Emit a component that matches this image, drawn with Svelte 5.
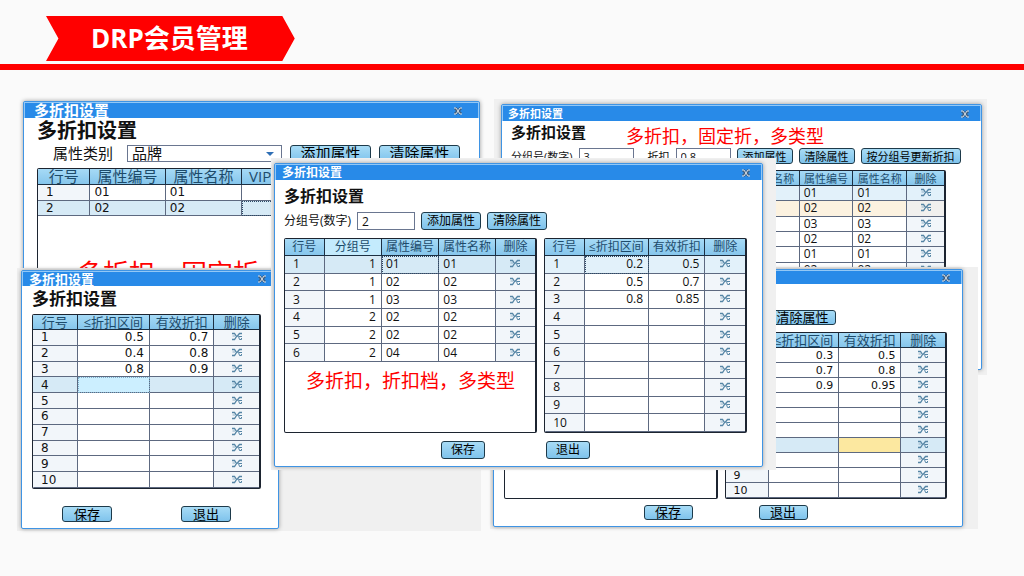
<script lang="ts">
  type Row = { cells: string[]; tone?: string; mark?: number; warm?: number }
  type Sheet = { names: string[]; widths: number[]; align: string; lit?: number; rows: Row[]; remove?: boolean }

  // numbered rows, padded with blanks up to count
  function fill(values: string[][], count: number, blanks: number): Row[] {
    const rows: Row[] = []
    for (let i = 0; i < count; i++) {
      rows.push({ cells: [String(i + 1), ...(values[i] ?? Array(blanks).fill(''))] })
    }
    return rows
  }

  const fixedSheet: Sheet = {
    names: ['行号', '属性编号', '属性名称', 'VIP折扣', ''],
    widths: [53, 76, 77, 68, 148],
    align: 'codes',
    rows: [
      { cells: ['1', '01', '01', '', ''] },
      { cells: ['2', '02', '02', '', ''], tone: 'active', mark: 3 },
    ],
  }

  const rangeSheet: Sheet = {
    names: ['行号', '≤折扣区间', '有效折扣'],
    widths: [45, 73, 65, 45],
    align: 'numbers',
    rows: fill([['0.5', '0.7'], ['0.4', '0.8'], ['0.8', '0.9']], 10, 2),
    remove: true,
  }
  rangeSheet.rows[3].tone = 'active'
  rangeSheet.rows[3].mark = 1

  const typeSheet: Sheet = {
    names: ['', '属性名称', '属性编号', '属性名称'],
    widths: [235, 54, 54, 54, 37],
    align: 'codes',
    rows: ['01', '02', '03', '02', '01', '02'].map((v) => ({ cells: ['', '', v, v] })),
    remove: true,
  }
  typeSheet.rows[0].tone = 'pale'
  typeSheet.rows[1].tone = 'cream'

  const groupSheet: Sheet = {
    names: ['行号', '分组号', '属性编号', '属性名称'],
    widths: [40, 58, 58, 57, 40],
    align: 'groups',
    lit: 1,
    rows: fill(
      [['1', '01', '01'], ['1', '02', '02'], ['1', '03', '03'], ['2', '02', '02'], ['2', '02', '02'], ['2', '04', '04']],
      6,
      3
    ),
    remove: true,
  }
  groupSheet.rows[0].tone = 'active'
  groupSheet.rows[0].mark = 2

  const levelSheet: Sheet = {
    names: ['行号', '≤折扣区间', '有效折扣'],
    widths: [40, 65, 57, 40],
    align: 'numbers',
    rows: fill([['0.2', '0.5'], ['0.5', '0.7'], ['0.8', '0.85']], 10, 2),
    remove: true,
  }
  levelSheet.rows[0].tone = 'pale'
  levelSheet.rows[0].mark = 1

  const bandSheet: Sheet = {
    names: ['行号', '≤折扣区间', '有效折扣'],
    widths: [44, 71, 63, 44],
    align: 'numbers',
    rows: fill([['0.3', '0.5'], ['0.7', '0.8'], ['0.9', '0.95']], 10, 2),
    remove: true,
  }
  bandSheet.rows[6].tone = 'active'
  bandSheet.rows[6].warm = 2

  const sum = (list: number[]) => list.reduce((a, b) => a + b, 0)
</script>

{#snippet titlebar()}
  <header class="titlebar">
    <span>多折扣设置</span>
    <button class="close" aria-label="关闭">
      <svg viewBox="0 0 10 8" width="10" height="8">
        <path d="M2 1L8 7M8 1L2 7" stroke="#3f5f80" stroke-width="3" />
        <path d="M1 1H3L7 7H9M9 1H7L3 7H1" fill="none" stroke="#d6e0ea" />
      </svg>
    </button>
  </header>
{/snippet}

{#snippet grid(sheet: Sheet, note: string)}
  <div class="grid" style="flex-grow: {sum(sheet.widths)}">
    <table class={sheet.align}>
      <colgroup>
        {#each sheet.widths as w}
          <col style="width: {(w / sum(sheet.widths)) * 100}%" />
        {/each}
      </colgroup>
      <thead>
        <tr>
          {#each sheet.names as name, i}
            <th class:lit={sheet.lit === i}>{name}</th>
          {/each}
          {#if sheet.remove}<th>删除</th>{/if}
        </tr>
      </thead>
      <tbody>
        {#each sheet.rows as row}
          <tr class={row.tone}>
            {#each row.cells as cell, i}
              <td class:index={i === 0} class:mark={row.mark === i} class:warm={row.warm === i}>{cell}</td>
            {/each}
            {#if sheet.remove}
              <td class="tool">
                <button class="remove" aria-label="删除">
                  <svg viewBox="0 0 12 9" width="12" height="9" fill="none" stroke="#5585a5">
                    <path d="M1 1.5H3.5L5.5 4.5L3.5 7.5H1" stroke-width="1.3" />
                    <path d="M1.5 4H4" stroke="#8fb0c6" />
                    <path d="M11 1.5H8.5L6 4.5" stroke-width="1.3" />
                    <path d="M11 4.5H7.5L8.5 7.5H10.5V6" />
                  </svg>
                </button>
              </td>
            {/if}
          </tr>
        {/each}
      </tbody>
    </table>
    {#if note}<p class="note">{note}</p>{/if}
  </div>
{/snippet}

{#snippet footer()}
  <footer>
    <button class="btn">保存</button>
    <button class="btn">退出</button>
  </footer>
{/snippet}

<div class="page">
  <div class="top">
    <h1>DRP会员管理</h1>
  </div>

  <main class="desktop">
    <div class="shot fixed">
      <section class="window">
        {@render titlebar()}
        <div class="body">
          <div class="head"><h2>多折扣设置</h2></div>
          <div class="toolbar">
            <label for="kind">属性类别</label>
            <span class="select">
              <select id="kind"><option>品牌</option></select>
              <svg viewBox="0 0 8 4" width="8" height="4"><path d="M0 0H8L4 4Z" fill="#2f6fb5" /></svg>
            </span>
            <button class="btn">添加属性</button>
            <button class="btn">清除属性</button>
          </div>
          <div class="grids">{@render grid(fixedSheet, '多折扣，固定折')}</div>
        </div>
      </section>
    </div>

    <div class="shot types">
      <section class="window">
        {@render titlebar()}
        <div class="body">
          <div class="head">
            <h2>多折扣设置</h2>
            <p class="note">多折扣，固定折，多类型</p>
          </div>
          <div class="toolbar">
            <label for="group-a">分组号(数字)</label>
            <input id="group-a" value="3" />
            <label for="rate">折扣</label>
            <input id="rate" value="0.8" />
            <button class="btn">添加属性</button>
            <button class="btn">清除属性</button>
            <button class="btn long">按分组号更新折扣</button>
          </div>
          <div class="grids">{@render grid(typeSheet, '')}</div>
        </div>
      </section>
    </div>

    <div class="shot range">
      <section class="window">
        {@render titlebar()}
        <div class="body">
          <div class="head"><h2>多折扣设置</h2></div>
          <div class="grids">{@render grid(rangeSheet, '')}</div>
          {@render footer()}
        </div>
      </section>
    </div>

    <div class="shot bands">
      <section class="window">
        {@render titlebar()}
        <div class="body">
          <div class="toolbar">
            <button class="btn">清除属性</button>
          </div>
          <div class="grids">
            <div class="grid blank"></div>
            {@render grid(bandSheet, '')}
          </div>
          {@render footer()}
        </div>
      </section>
    </div>

    <div class="shot levels">
      <section class="window">
        {@render titlebar()}
        <div class="body">
          <div class="head"><h2>多折扣设置</h2></div>
          <div class="toolbar">
            <label for="group-b">分组号(数字)</label>
            <input id="group-b" value="2" />
            <button class="btn">添加属性</button>
            <button class="btn">清除属性</button>
          </div>
          <div class="grids">
            {@render grid(groupSheet, '多折扣，折扣档，多类型')}
            {@render grid(levelSheet, '')}
          </div>
          {@render footer()}
        </div>
      </section>
    </div>
  </main>
</div>

<style>
  :global(body) {
    margin: 0;
    background: #fafafa;
  }
  .page {
    min-height: 100vh;
    font-family: "Open Sans", "Noto Sans CJK SC", sans-serif;
    color: #111;
    overflow: hidden;
  }
  .page * {
    box-sizing: border-box;
  }
  h1, h2, p {
    margin: 0;
  }
  button, input, select {
    font: inherit;
    color: inherit;
    margin: 0;
    padding: 0;
  }

  .top {
    padding: 16px 0 3px 46px;
    border-bottom: 6px solid #f00;
    display: flex;
  }
  h1 {
    padding: 0 47px 0 45px;
    background: #f00;
    clip-path: polygon(0 0, 95% 0, 100% 50%, 95% 100%, 0 100%, 5% 50%);
    color: #fff;
    font-size: 26px;
    line-height: 45px;
    font-weight: 700;
    white-space: nowrap;
  }

  .desktop {
    position: relative;
    min-height: 480px;
  }

  /* each window sits on its own grey plate */
  .shot {
    position: absolute;
    background: #f0f0f0;
    display: flex;
    font-size: var(--size);
    line-height: 1;
    --size: 12px;
    --bar: 16px;
    --title: 12px;
    --heading: 16px;
    --digits: "Open Sans";
    --digit: 12px;
    --th: 17px;
    --btn: 60px;
    --btn-h: 18px;
  }
  .window {
    flex: 1;
    min-width: 0;
    background: #fff;
    border: 1px solid #3f94e4;
    border-radius: 2px;
    box-shadow: 0 0 4px #999;
  }
  .titlebar {
    display: flex;
    align-items: center;
    justify-content: space-between;
    height: var(--bar);
    padding: 0 10px 0 6px;
    border: 1px solid #93c8f6;
    border-bottom: 0;
    background: #288ae8;
    color: #fff;
    font-size: var(--title);
    font-weight: 700;
  }
  .close, .remove {
    display: inline-flex;
    border: 0;
    background: none;
  }
  .body {
    margin: 0 1px;
  }
  .head {
    display: flex;
    align-items: center;
  }
  h2 {
    font-size: var(--heading);
    line-height: 1;
    font-weight: 700;
    white-space: nowrap;
  }
  .note {
    color: #f00;
    font-family: "Noto Sans CJK SC", sans-serif;
    font-weight: 400;
    white-space: nowrap;
  }
  .toolbar {
    display: flex;
    align-items: center;
    white-space: nowrap;
    height: var(--btn-h);
  }
  .toolbar input, select {
    border: 1px solid #6a7690;
    background: #fff;
    height: var(--btn-h);
    padding: 0 4px;
    border-radius: 0;
  }
  .btn {
    flex: none;
    width: var(--btn);
    height: var(--btn-h);
    border: 1px solid #1d3a4a;
    border-radius: 3px;
    background: linear-gradient(#a8dcf6, #7fc3ec);
    color: #000;
    line-height: 1;
    white-space: nowrap;
  }

  .grids {
    display: flex;
    gap: 7px;
  }
  .grid {
    flex: 1 1 0;
    min-width: 0;
    border: 1px solid #1c2430;
    border-right-width: 2px;
    border-radius: 2px;
    background: #fff;
    overflow: hidden;
  }
  table {
    width: 100%;
    height: var(--table);
    table-layout: fixed;
    border-collapse: separate;
    border-spacing: 0;
  }
  th {
    height: var(--th);
    padding: 0;
    background: linear-gradient(#a6daf6, #86c6ec);
    border-right: 1px solid #1c2f42;
    border-bottom: 1px solid #1c2f42;
    color: #1d4b6b;
    font-weight: 400;
    white-space: nowrap;
  }
  th.lit {
    background: #c4ebfd;
  }
  td {
    padding: 0 4px;
    border-right: 1px solid #5d6980;
    border-bottom: 1px solid #5d6980;
    font-family: var(--digits), sans-serif;
    font-size: var(--digit);
    line-height: 1;
  }
  th:last-child, td:last-child {
    border-right: 0;
  }
  td.index, td.tool {
    background: #f2f6fa;
  }
  td.index {
    padding-left: 8px;
  }
  td.tool {
    text-align: center;
  }
  .numbers td:not(.index, .tool) {
    text-align: right;
    padding-right: 5px;
  }
  .groups td:nth-child(2) {
    text-align: right;
    padding-right: 5px;
  }
  .active td, .active td.tool, .active td.index {
    background: #d6eaf6;
  }
  .pale td, .pale td.tool, .pale td.index {
    background: #e2f1fa;
  }
  .cream td {
    background: #fcf2e0;
  }
  .cream td.tool {
    background: #f1f0ee;
  }
  .active td.warm {
    background: #fce8a0;
  }
  td.mark {
    outline: 1px dotted #2c4a66;
    outline-offset: -1px;
  }

  footer {
    display: flex;
    justify-content: center;
  }

  .fixed {
    left: 23px;
    top: 31px;
    width: 457px;
    height: 200px;
    --size: 15px;
    --title: 15px;
    --heading: 20px;
    --digits: "DejaVu Sans";
    --digit: 12px;
    --th: 16px;
    --table: 47px;
    --btn: 81px;
    --btn-h: 17px;
  }
  .fixed .titlebar {
    padding-left: 9px;
    padding-right: 15px;
  }
  .fixed .body {
    padding: 0 20px 0 12px;
  }
  .fixed .head {
    height: 25px;
    margin-bottom: 2px;
  }
  .fixed .toolbar {
    padding-left: 16px;
    gap: 8px;
  }
  .fixed .grids {
    margin-top: 6px;
  }
  .fixed .grid {
    height: 130px;
  }
  .fixed .note {
    margin: 43px 0 0 39px;
    font-size: 26px;
    line-height: 26px;
  }
  .select {
    position: relative;
    display: flex;
    margin-left: 6px;
  }
  select {
    appearance: none;
    width: 155px;
  }
  .select svg {
    position: absolute;
    right: 8px;
    top: 7px;
    pointer-events: none;
  }

  .types {
    left: 494px;
    top: 29px;
    width: 493px;
    height: 276px;
    padding: 5px 5px 5px 7px;
    --size: 11px;
    --title: 11px;
    --heading: 15px;
    --th: 15px;
    --table: 107px;
    --btn: 56px;
    --btn-h: 16px;
  }
  .types .titlebar {
    padding-left: 5px;
  }
  .types .body {
    padding: 0 34px 0 8px;
  }
  .types .head {
    height: 23px;
    margin-bottom: 4px;
    gap: 40px;
  }
  .types .note {
    font-size: 18px;
    padding-top: 4px;
  }
  .types .toolbar {
    gap: 6px;
  }
  .types .toolbar input {
    width: 55px;
    flex: none;
  }
  .types #group-a {
    margin-right: 8px;
  }
  .types .long {
    --btn: 100px;
  }
  .types .grids {
    margin-top: 6px;
  }

  .range {
    left: 17px;
    top: 198px;
    width: 464px;
    height: 263px;
    padding: 2px 202px 2px 4px;
    --size: 13px;
    --title: 13px;
    --bar: 15px;
    --heading: 17px;
    --digits: "DejaVu Sans";
    --th: 15px;
    --table: 173px;
    --btn: 50px;
    --btn-h: 16px;
  }
  .range .body {
    padding: 0 16px 0 9px;
  }
  .range .head {
    height: 24px;
    margin-bottom: 4px;
  }
  .range footer {
    margin-top: 17px;
    gap: 69px;
  }
  .range .active td.mark {
    background: #ccefff;
    outline-color: #7fb0cc;
  }

  .bands {
    left: 490px;
    top: 197px;
    width: 488px;
    height: 262px;
    padding: 2px 15px 2px 3px;
    --size: 13px;
    --title: 13px;
    --bar: 14px;
    --digits: "DejaVu Sans";
    --digit: 11px;
    --th: 15px;
    --table: 165px;
    --btn: 67px;
    --btn-h: 15px;
  }
  .bands .body {
    padding: 26px 14px 0 9px;
  }
  .bands .toolbar {
    justify-content: flex-end;
    padding-right: 111px;
  }
  .bands .grids {
    margin-top: 7px;
  }
  .bands .blank {
    flex-grow: 213;
  }
  .bands footer {
    margin-top: 6px;
    gap: 66px;
    --btn: 49px;
  }

  .levels {
    left: 271px;
    top: 88px;
    width: 505px;
    height: 312px;
    padding: 5px 13px 3px 3px;
    --table: 193px;
  }
  .levels .body {
    padding: 0 14px 0 8px;
  }
  .levels .head {
    height: 32px;
  }
  .levels .toolbar {
    gap: 6px;
  }
  .levels .toolbar input {
    width: 58px;
  }
  .levels .grids {
    margin-top: 8px;
  }
  .levels table.groups {
    height: 123px;
  }
  .levels .note {
    margin: 6px 0 0 21px;
    font-size: 19px;
    line-height: 24px;
  }
  .levels footer {
    margin-top: 8px;
    gap: 61px;
    --btn: 44px;
  }
</style>
